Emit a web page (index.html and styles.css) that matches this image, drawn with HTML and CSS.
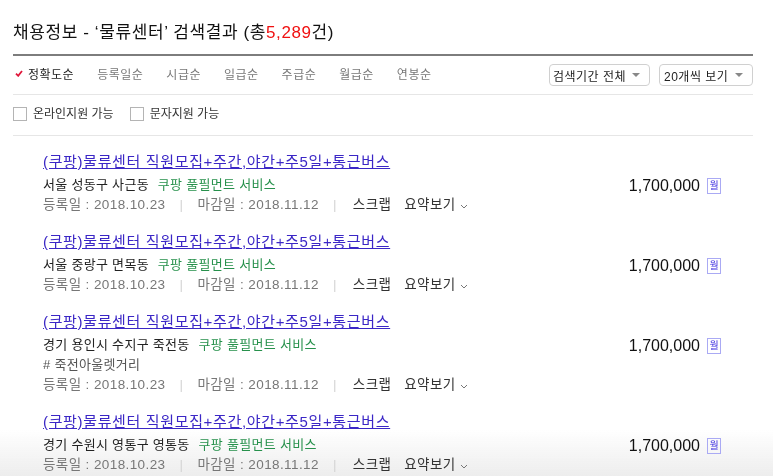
FILE: index.html
```html
<!DOCTYPE html>
<html lang="ko">
<head>
    <meta charset="UTF-8" />
    <meta name="viewport" content="width=device-width, initial-scale=1.0" />
    <title>채용정보 검색결과</title>
    <link rel="stylesheet" href="styles.css">
</head>
<body>

<div class="result-wrap">
    <h2 class="result-title">채용정보 - ‘물류센터’ 검색결과 (총<span class="count">5,289</span>건)</h2>

    <!-- 정렬 + 보기 옵션 -->
    <div class="sort-bar">
        <ul class="sort-list">
            <li class="on">
                <svg class="check" width="8" height="7" viewBox="0 0 8 7"><path d="M1 3.6 L3.2 5.8 L7 1" fill="none" stroke="#e0173a" stroke-width="1.8"/></svg>
                정확도순
            </li>
            <li>등록일순</li>
            <li>시급순</li>
            <li>일급순</li>
            <li>주급순</li>
            <li>월급순</li>
            <li>연봉순</li>
        </ul>
        <div class="selects">
            <div class="select period">검색기간 전체 <span class="caret"></span></div>
            <div class="select per-page">20개씩 보기 <span class="caret"></span></div>
        </div>
    </div>

    <div class="filter-bar">
        <label class="chk"><span class="box"></span>온라인지원 가능</label>
        <label class="chk"><span class="box"></span>문자지원 가능</label>
    </div>

    <!-- 공고 목록 -->
    <ul class="job-list">
        <li class="job">
            <div class="job-info">
                <a class="job-title" href="#">(쿠팡)물류센터 직원모집+주간,야간+주5일+통근버스</a>
                <p class="job-loc">서울 성동구 사근동 <span class="company">쿠팡 풀필먼트 서비스</span></p>
                <p class="job-meta">
                    <span>등록일 : 2018.10.23</span><span class="sep">|</span><span>마감일 : 2018.11.12</span><span class="sep">|</span>
                    <span class="act">스크랩</span><span class="act">요약보기 <svg width="8" height="5" viewBox="0 0 8 5"><path d="M1 1 L4 4 L7 1" fill="none" stroke="#777" stroke-width="1"/></svg></span>
                </p>
            </div>
            <div class="pay">1,700,000 <span class="unit">월</span></div>
        </li>
        <li class="job">
            <div class="job-info">
                <a class="job-title" href="#">(쿠팡)물류센터 직원모집+주간,야간+주5일+통근버스</a>
                <p class="job-loc">서울 중랑구 면목동 <span class="company">쿠팡 풀필먼트 서비스</span></p>
                <p class="job-meta">
                    <span>등록일 : 2018.10.23</span><span class="sep">|</span><span>마감일 : 2018.11.12</span><span class="sep">|</span>
                    <span class="act">스크랩</span><span class="act">요약보기 <svg width="8" height="5" viewBox="0 0 8 5"><path d="M1 1 L4 4 L7 1" fill="none" stroke="#777" stroke-width="1"/></svg></span>
                </p>
            </div>
            <div class="pay">1,700,000 <span class="unit">월</span></div>
        </li>
        <li class="job">
            <div class="job-info">
                <a class="job-title" href="#">(쿠팡)물류센터 직원모집+주간,야간+주5일+통근버스</a>
                <p class="job-loc">경기 용인시 수지구 죽전동 <span class="company">쿠팡 풀필먼트 서비스</span></p>
                <p class="job-tag"># 죽전아울렛거리</p>
                <p class="job-meta">
                    <span>등록일 : 2018.10.23</span><span class="sep">|</span><span>마감일 : 2018.11.12</span><span class="sep">|</span>
                    <span class="act">스크랩</span><span class="act">요약보기 <svg width="8" height="5" viewBox="0 0 8 5"><path d="M1 1 L4 4 L7 1" fill="none" stroke="#777" stroke-width="1"/></svg></span>
                </p>
            </div>
            <div class="pay">1,700,000 <span class="unit">월</span></div>
        </li>
        <li class="job">
            <div class="job-info">
                <a class="job-title" href="#">(쿠팡)물류센터 직원모집+주간,야간+주5일+통근버스</a>
                <p class="job-loc">경기 수원시 영통구 영통동 <span class="company">쿠팡 풀필먼트 서비스</span></p>
                <p class="job-meta">
                    <span>등록일 : 2018.10.23</span><span class="sep">|</span><span>마감일 : 2018.11.12</span><span class="sep">|</span>
                    <span class="act">스크랩</span><span class="act">요약보기 <svg width="8" height="5" viewBox="0 0 8 5"><path d="M1 1 L4 4 L7 1" fill="none" stroke="#777" stroke-width="1"/></svg></span>
                </p>
            </div>
            <div class="pay">1,700,000 <span class="unit">월</span></div>
        </li>
    </ul>
</div>

<!-- 하단 배경 그라데이션 -->
<div class="bottom-fade"></div>

</body>
</html>
```

FILE: styles.css
```css
body {
    margin: 0;
    padding: 0;
    background-color: #fff;
    font-family: "Liberation Sans", "Noto Sans CJK KR", sans-serif;
    color: #222;
    overflow: hidden;
}
ul, p {
    margin: 0;
    padding: 0;
    list-style: none;
}
.result-wrap {
    width: 740px;
    margin-left: 13px;
}
.result-title {
    margin: 0;
    padding: 21px 0 9px;
    font-size: 17px;
    letter-spacing: 0.6px;
    line-height: 24px;
    font-weight: normal;
    color: #111;
    border-bottom: 2px solid #7d7d7d;
}
.result-title .count {
    color: #f01010;
}

/* 정렬 */
.sort-bar {
    display: flex;
    align-items: center;
    justify-content: space-between;
    box-sizing: border-box;
    height: 39px;
    padding-bottom: 3px;
    border-bottom: 1px solid #e6e6e6;
}
.sort-list {
    display: flex;
    align-items: center;
    padding-left: 2px;
}
.sort-list li {
    font-size: 12px;
    letter-spacing: 0.5px;
    color: #777;
    margin-right: 23px;
    display: flex;
    align-items: center;
}
.sort-list li.on {
    color: #222;
}
.sort-list .check {
    margin-right: 5px;
}
.selects {
    display: flex;
    gap: 9px;
    padding-top: 3px;
}
.select {
    box-sizing: border-box;
    height: 22px;
    border: 1px solid #d0d0d0;
    border-radius: 4px;
    font-size: 12px;
    letter-spacing: 0.5px;
    color: #222;
    display: flex;
    align-items: center;
    justify-content: space-between;
    padding: 0 9px 0 3px;
}
.select.period {
    width: 101px;
}
.select.per-page {
    width: 94px;
    padding-left: 4px;
}
.caret {
    width: 0;
    height: 0;
    border-left: 4px solid transparent;
    border-right: 4px solid transparent;
    border-top: 4px solid #888;
}

/* 필터 체크박스 */
.filter-bar {
    display: flex;
    align-items: center;
    box-sizing: border-box;
    height: 41px;
    padding-bottom: 5px;
    border-bottom: 1px solid #e6e6e6;
}
.chk {
    display: flex;
    align-items: center;
    font-size: 12px;
    color: #333;
    margin-right: 16px;
}
.chk .box {
    box-sizing: border-box;
    width: 14px;
    height: 14px;
    border: 1px solid #b4b4b4;
    margin-right: 6px;
    position: relative;
    top: 1px;
}

/* 공고 목록 */
.job {
    display: flex;
    justify-content: space-between;
    padding: 16px 32px 1px 30px;
}
.job-title {
    display: block;
    font-size: 15px;
    letter-spacing: 0.65px;
    line-height: 20px;
    color: #3b27c6;
    text-decoration: underline;
    margin-bottom: 3px;
}
.job-loc,
.job-tag,
.job-meta {
    font-size: 13px;
    letter-spacing: 0.3px;
    line-height: 20px;
}
.job-loc {
    color: #222;
}
.job-loc .company {
    color: #27914c;
    margin-left: 5px;
}
.job-tag {
    color: #555;
}
.job-meta {
    font-size: 13.5px;
    letter-spacing: 0.4px;
    color: #777;
    display: flex;
    align-items: center;
}
.job-meta .sep {
    color: #d4d4d4;
    margin: 0 14px;
}
.job-meta .act {
    color: #333;
    margin-left: 2px;
    margin-right: 11px;
    display: flex;
    align-items: center;
}
.job-meta .act svg {
    margin-left: 4px;
    margin-top: 2px;
}
.pay {
    display: flex;
    align-items: center;
    height: 20px;
    margin-top: 24px;
    font-size: 16px;
    color: #111;
}
.pay .unit {
    box-sizing: border-box;
    width: 14px;
    height: 16px;
    margin-left: 7px;
    border: 1px solid #aaaaf4;
    color: #3d2ee0;
    font-size: 10px;
    line-height: 14px;
    text-align: center;
}

.bottom-fade {
    position: fixed;
    left: 0;
    right: 0;
    bottom: 0;
    height: 46px;
    z-index: -1;
    background: linear-gradient(to bottom, rgba(238, 238, 238, 0), #ededed);
}
```
